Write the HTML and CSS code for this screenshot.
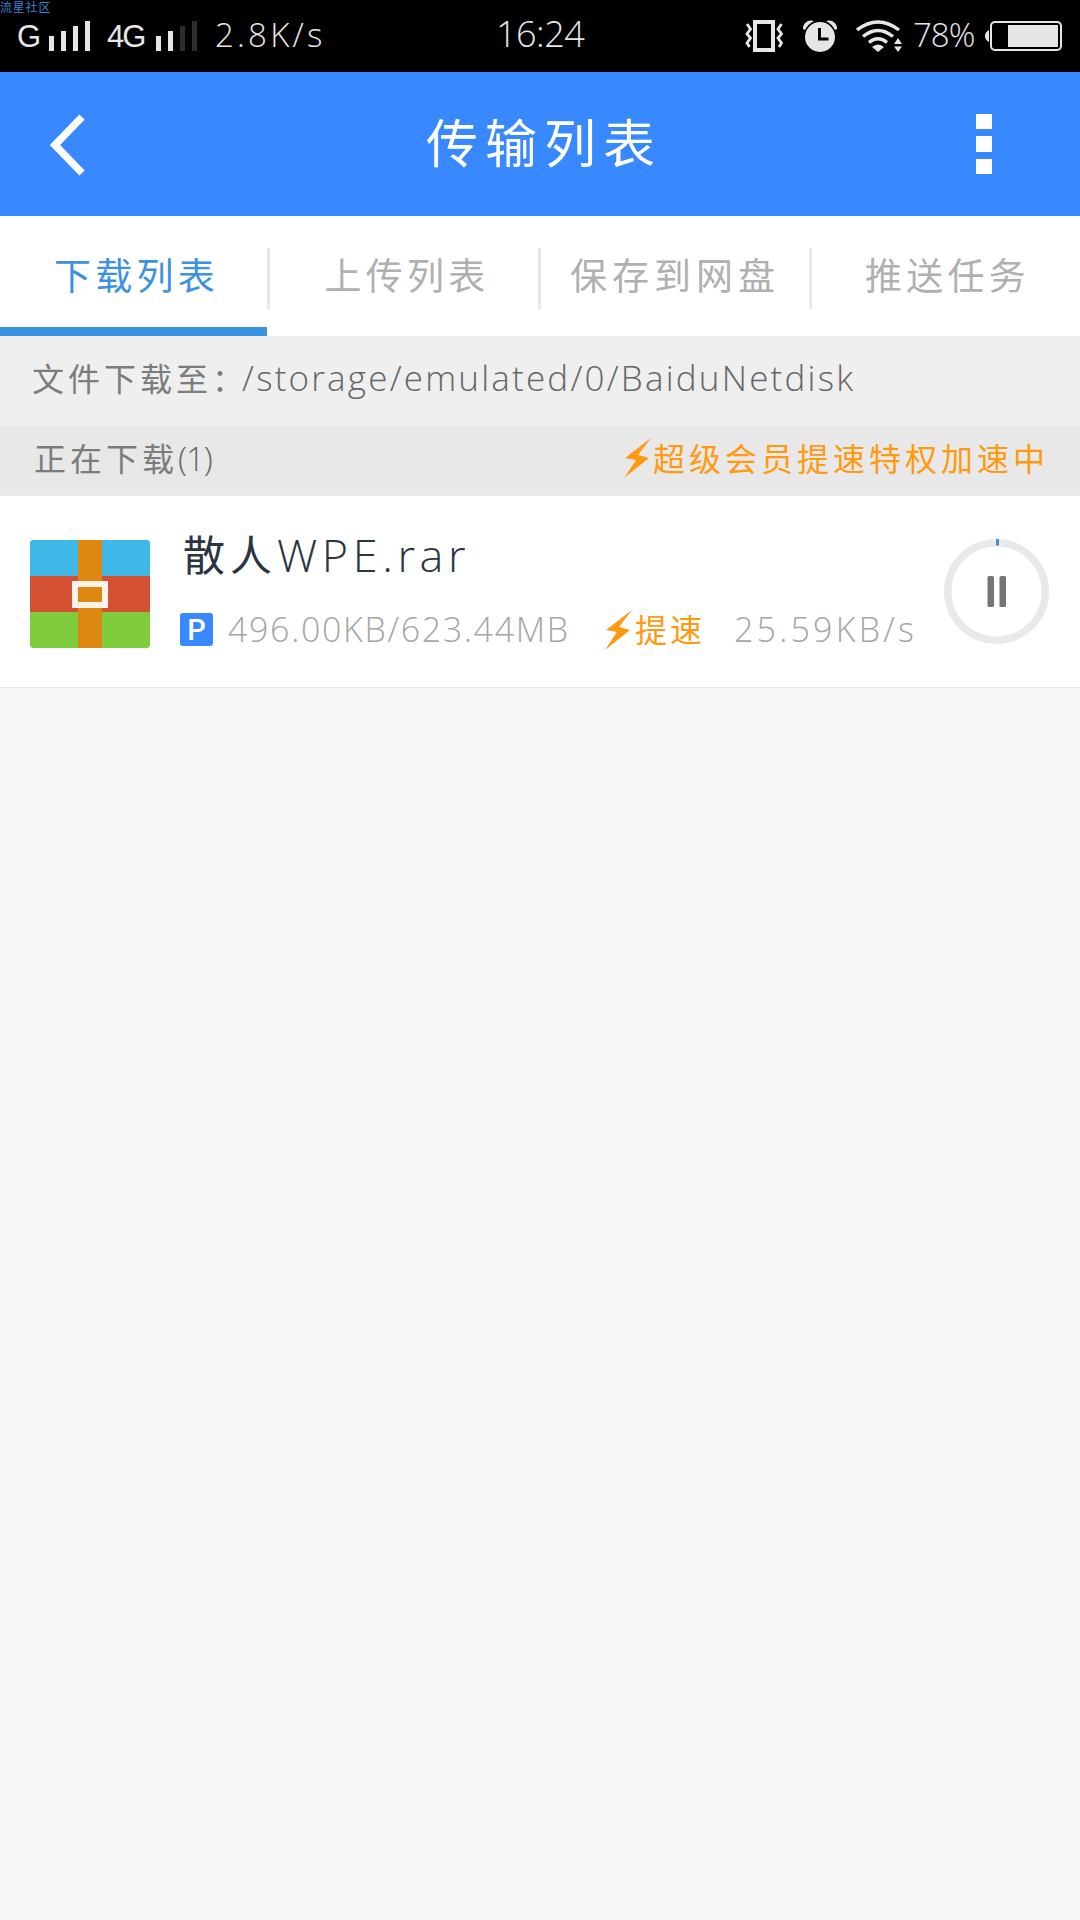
FILE: index.html
```html
<!DOCTYPE html>
<html lang="zh-CN">
<head>
<meta charset="utf-8">
<title>传输列表</title>
<link rel="stylesheet" href="styles.css">
</head>
<body>
<div class="watermark">流星社区</div>
<div class="status">
  <div class="status-left">
    <span class="carrier">G</span>
    <svg class="bars" width="41" height="30" viewBox="0 0 41 30"><path d="M0 15h5v15H0zM12 10h5v20h-5zM24 5h5v25h-5zM36 0h5v30h-5z"/></svg>
    <span class="carrier carrier-4g">4G</span>
    <svg class="bars" width="41" height="30" viewBox="0 0 41 30"><path d="M0 15h5v15H0zM12 10h5v20h-5z"/><path class="dim" d="M24 5h5v25h-5zM36 0h5v30h-5z"/></svg>
    <span class="rate">2.8K/s</span>
  </div>
  <span class="clock">16:24</span>
  <div class="status-right">
    <svg class="vibrate" width="39" height="32" viewBox="0 0 39 32"><path class="line" stroke-width="4" d="M10 2h18v28H10z"/><path class="line" stroke-width="2.8" d="M2 4l3.500 5-3.500 5 3.500 4-3.500 5 2.500 4M36.500 4l-3.500 5 3.500 5-3.500 4 3.500 5-2.500 4"/></svg>
    <svg class="alarm" width="34" height="32" viewBox="0 0 34 32"><path d="M0 9A8 8 0 0 1 11 1Q5 4 2 10zM34 9A8 8 0 0 0 23 1Q29 4 32 10z"/><circle cx="17" cy="17" r="15"/><path class="hand" d="M16.500 8v11h9"/></svg>
    <svg class="wifi" width="46" height="32" viewBox="0 0 46 32"><path class="line" stroke-width="3.400" d="M1 10Q22-6 43 10M7 16.500Q22 4.500 37 16.500M13 22.500Q22 15 31 22.500"/><path d="M16 27q6-5 12 0l-6 5zM42 18l4 6h-8zM42 32l4-5.500h-8z"/></svg>
    <span class="percent">78%</span>
    <svg class="battery" width="77" height="30" viewBox="0 0 77 30"><path d="M4 9v12q-4-2-4-6t4-6zM23 4h50v22H23z"/><rect class="line" stroke-width="2" x="6" y="1" width="70" height="28" rx="4"/></svg>
  </div>
</div>
<header class="header">
  <svg class="back" width="36" height="62" viewBox="0 0 36 62"><path d="M32 3L5 31l27 28"/></svg>
  <h1 class="title">传输列表</h1>
  <div class="more"><i></i><i></i><i></i></div>
</header>
<nav class="tabs">
  <a class="tab active">下载列表</a>
  <a class="tab">上传列表</a>
  <a class="tab wide">保存到网盘</a>
  <a class="tab">推送任务</a>
</nav>
<div class="path"><span>文件下载至：</span><span class="dir">/storage/emulated/0/BaiduNetdisk</span></div>
<div class="section">
  <div><span>正在下载</span><span class="count">(1)</span></div>
  <div class="boost"><svg class="bolt" width="27" height="40" viewBox="0 0 27 40"><path d="M27 0L1 20l11 2L0 40l25-20-11-3z"/></svg><span>超级会员提速特权加速中</span></div>
</div>
<div class="item">
  <svg class="file-icon" width="120" height="108" viewBox="0 0 120 108"><path fill="#3eb8e6" d="M2 0h116l2 2v34H0V2z"/><path fill="#d35033" d="M0 36h120v36H0z"/><path fill="#7fcc3d" d="M0 72h120v34l-2 2H2l-2-2z"/><path fill="#dd8911" d="M48 0h24v108H48z"/><path fill="#fdf3ea" d="M42 41h36v27H42z"/><path fill="#dd8911" d="M48 47h24v15H48z"/></svg>
  <div class="info">
    <div class="name"><span>散人</span><span class="ext">WPE.rar</span></div>
    <div class="meta">
      <span class="badge">P</span>
      <span class="size">496.00KB/623.44MB</span>
      <span class="speedup"><svg class="bolt" width="27" height="40" viewBox="0 0 27 40"><path d="M27 0L1 20l11 2L0 40l25-20-11-3z"/></svg><span>提速</span></span>
      <span class="speed">25.59KB/s</span>
    </div>
  </div>
  <svg class="pause" width="106" height="106" viewBox="0 0 106 106"><circle cx="52.500" cy="52.500" r="48.700"/><path class="tick" d="M52 0h3v6.500h-3z"/><rect x="43.500" y="37" width="6.500" height="31" rx="1.500"/><rect x="55.500" y="37" width="6.500" height="31" rx="1.500"/></svg>
</div>
</body>
</html>
```
FILE: styles.css
```css
* { box-sizing: border-box; }
body {
  margin: 0;
  width: 1080px;
  height: 1920px;
  overflow: hidden;
  background: #f4f6f8;
  font-family: "Open Sans", "Noto Sans CJK SC", sans-serif;
  font-weight: 300;
  white-space: nowrap;
}
svg { display: block; flex: none; }
.watermark {
  position: absolute;
  left: 0;
  top: 0;
  font: 400 12px/13px "Noto Sans CJK SC", sans-serif;
  letter-spacing: 0.8px;
  color: #3585d0;
}
.status {
  display: grid;
  grid-template-columns: 496px 1fr auto;
  height: 72px;
  padding-right: 18px;
  background: #000;
  color: #e6e6e6;
  fill: #e6e6e6;
  line-height: 72px;
}
.status-left, .status-right { display: flex; align-items: center; }
.status-left { padding-left: 17px; }
.carrier { width: 32px; font: 400 31px/71px "Liberation Sans", sans-serif; letter-spacing: -2px; }
.carrier-4g { width: 50px; margin-left: 17px; margin-right: -1px; }
.dim { fill: #2d2d2d; }
.rate { margin-left: 18px; font-size: 33px; line-height: 66px; letter-spacing: 3.2px; padding-bottom: 3px; }
.clock { font-size: 36px; line-height: 67px; letter-spacing: -0.5px; }
.line { fill: none; stroke: #e6e6e6; }
.hand { fill: none; stroke: #000; stroke-width: 3; }
.alarm { margin-left: 19px; }
.wifi { margin-left: 19px; }
.percent { width: 72px; margin-left: 11px; padding-bottom: 3px; font-size: 33px; line-height: 68px; letter-spacing: -1px; }
.header {
  display: flex;
  align-items: center;
  justify-content: space-between;
  height: 144px;
  padding: 0 88px 0 50px;
  background: #3888ff;
  color: #fff;
}
.back { position: relative; top: 1px; fill: none; stroke: #fff; stroke-width: 7.5; }
.title { margin: 0 0 2px 26px; font-size: 52px; font-weight: 400; line-height: 72px; letter-spacing: 7px; }
.more { display: grid; gap: 7px; }
.more i { width: 16px; height: 15.500px; background: #fff; }
.tabs {
  display: grid;
  grid-template-columns: 270px 271px 271px 1fr;
  height: 120px;
  background: #fff;
}
.tab {
  display: flex;
  align-items: center;
  justify-content: center;
  padding: 0 0 5px 3px;
  font-size: 37px;
  font-weight: 400;
  letter-spacing: 4.2px;
  color: #b0b0b0;
  background: linear-gradient(#e8e8e8, #e8e8e8) right 32px / 3px 61px no-repeat;
}
.tab.wide { padding: 0 3px 5px 0; letter-spacing: 5px; }
.tab:last-child { background: none; }
.tab.active {
  color: #3c92e0;
  background: linear-gradient(#3993e3, #3993e3) 0 100% / 267px 9px no-repeat, linear-gradient(#e8e8e8, #e8e8e8) right 32px / 3px 61px no-repeat;
}
.path, .section { display: flex; align-items: center; color: #7c7c7c; font-size: 32px; font-weight: 400; letter-spacing: 4px; }
.path { height: 90px; padding: 0 0 8px 32px; background: #efefef; }
.path span:first-child { width: 210px; }
.dir { color: #666; font-size: 35px; font-weight: 300; letter-spacing: 2.2px; }
.section { justify-content: space-between; height: 70px; padding: 0 31px 7px 34px; background: #e8e8e8; border-bottom: 1px solid #eee; }
.count { color: #666; font-weight: 300; font-size: 33px; letter-spacing: -1px; }
.boost { display: flex; align-items: center; color: #ff9a10; gap: 2px; }
.bolt { position: relative; top: 1px; fill: #ff9a10; }
.item { display: flex; height: 192px; padding: 44px 30px 0; background: #fff; border-bottom: 1px solid #e6e8ea; }
.info { width: 765px; margin-left: 30px; }
.name { display: flex; height: 54px; margin-top: -13px; padding-left: 3px; font-size: 42px; line-height: 56px; letter-spacing: 5px; color: #2b3442; font-weight: 400; }
.ext { font-size: 45px; font-weight: 300; letter-spacing: 4.6px; }
.meta { display: flex; align-items: center; height: 40px; margin-top: 28px; color: #a6a6a6; font-size: 34px; }
.badge { width: 33px; height: 33px; border-radius: 3px; background: #3888ff; color: #fff; font: 500 29px/34px Roboto, sans-serif; text-align: center; }
.size { width: 377px; margin-left: 15px; letter-spacing: 1.65px; }
.speedup { display: flex; align-items: center; gap: 3px; width: 129px; color: #ff9a10; font-size: 32px; font-weight: 400; letter-spacing: 3px; }
.speedup span { padding-bottom: 3px; }
.speed { letter-spacing: 3.2px; }
.pause { position: relative; top: -1px; margin-left: 1px; fill: #757575; }
.pause circle { fill: none; stroke: #e9e9e9; stroke-width: 7.500; }
.pause .tick { fill: #5090c8; }
```
